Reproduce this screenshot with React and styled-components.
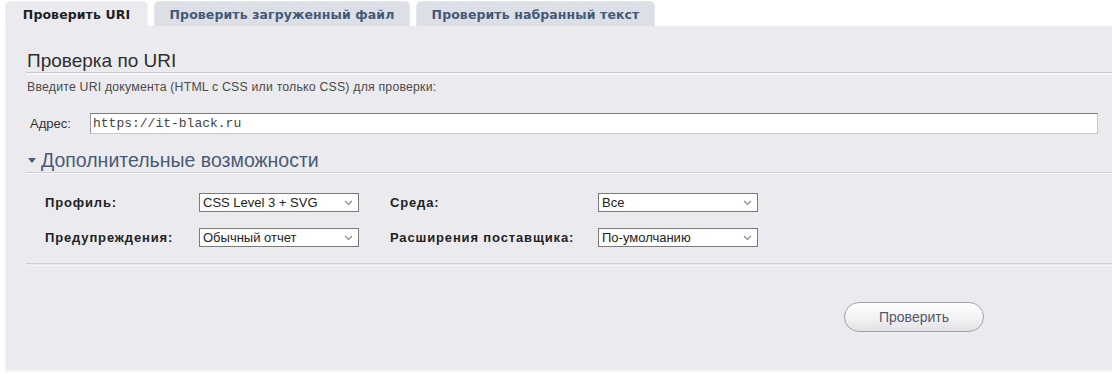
import styled, { createGlobalStyle } from "styled-components";

const GlobalStyle = createGlobalStyle`
  html, body {
    margin: 0;
    padding: 0;
    background: #ffffff;
    font-family: "Liberation Sans", Arial, sans-serif;
    overflow: hidden;
  }
`;

const Page = styled.div`
  width: 1112px;
  height: 375px;
  padding-left: 5px;
  box-sizing: border-box;
`;

const TabList = styled.div`
  display: flex;
  gap: 6px;
  padding-top: 1px;
  height: 26px;
  box-sizing: border-box;
`;

const Tab = styled.div`
  display: flex;
  align-items: center;
  justify-content: center;
  width: ${(p) => p.$w}px;
  height: 25px;
  border-radius: 5px 5px 0 0;
  box-sizing: border-box;
  font-family: "DejaVu Sans", Verdana, sans-serif;
  font-size: 12.5px;
  font-weight: bold;
  letter-spacing: 0.1px;
  background: ${(p) => (p.$active ? "#ebebef" : "#dce0e6")};
  color: ${(p) => (p.$active ? "#1f1f1f" : "#44597a")};
  border: 1px solid ${(p) => (p.$active ? "#f1f1f3" : "#e4e7eb")};
  border-bottom: none;
`;

const Panel = styled.div`
  width: 1130px;
  height: 346px;
  background: #ebebef;
  border-left: 1px solid #f3f3f5;
  border-bottom: 2px solid #f4f4f6;
  box-sizing: border-box;
  padding: 24px 0 0 20px;
`;

const Heading = styled.h2`
  margin: 0;
  font-size: 19px;
  font-weight: normal;
  line-height: 22px;
  color: #2e2e2e;
  padding-left: 1px;
  border-bottom: 1px solid #c9c9cd;
  box-shadow: 0 2px 0 #f6f6f8;
`;

const Hint = styled.p`
  margin: 6px 0 0 1px;
  font-size: 12.3px;
  letter-spacing: 0.2px;
  line-height: 16px;
  color: #4a4a4a;
`;

const AddressRow = styled.div`
  display: flex;
  align-items: center;
  margin-top: 18px;
  padding-left: 4px;
`;

const FieldLabel = styled.label`
  font-size: 13px;
  color: #333;
  width: 60px;
`;

const UrlInput = styled.div`
  width: 1008px;
  height: 21px;
  box-sizing: border-box;
  background: #fff;
  border: 1px solid #c8c8c8;
  border-top-color: #7c7c7c;
  border-left-color: #9a9a9a;
  display: flex;
  align-items: center;
  padding-left: 2px;
  font-family: "Liberation Mono", "Courier New", monospace;
  font-size: 13px;
  color: #444;
`;

const Legend = styled.div`
  margin-top: 14px;
  display: flex;
  align-items: center;
  gap: 4px;
  font-size: 19.5px;
  line-height: 24px;
  color: #4a5a75;
  border-bottom: 1px solid #d0d0d4;
  box-shadow: 0 1px 0 #f6f6f8;
  padding-left: 1px;
`;

const Options = styled.div`
  display: grid;
  grid-template-columns: 154px 191px 208px 160px;
  row-gap: 16px;
  margin-top: 20px;
  padding-left: 19px;
  align-items: center;
`;

const OptLabel = styled.div`
  font-size: 13px;
  font-weight: bold;
  color: #222;
  letter-spacing: 0.85px;
`;

const Select = styled.div`
  width: 160px;
  height: 19px;
  box-sizing: border-box;
  background: #fff;
  border: 1px solid #7a7a7a;
  display: flex;
  align-items: center;
  justify-content: space-between;
  padding: 0 5px 0 3px;
  font-size: 13px;
  color: #222;
`;

const Separator = styled.div`
  margin-top: 16px;
  height: 1px;
  background: #cfcfd3;
  box-shadow: 0 2px 0 #f6f6f8;
`;

const Actions = styled.div`
  display: flex;
  padding-left: 818px;
  margin-top: 38px;
`;

const Button = styled.button`
  width: 140px;
  height: 30px;
  border-radius: 15px;
  border: 1px solid #a2a2a6;
  background: linear-gradient(#ffffff, #f2f2f4 55%, #e2e2e6);
  box-shadow: inset 0 1px 0 #fff;
  font-family: "Liberation Sans", Arial, sans-serif;
  font-size: 14px;
  color: #525668;
  padding: 0;
`;

const Chevron = () => (
  <svg width="9" height="6" viewBox="0 0 9 6">
    <path d="M1 1l3.5 3.5L8 1" fill="none" stroke="#8a8a8a" strokeWidth="1.2" />
  </svg>
);

const Caret = () => (
  <svg width="10" height="10" viewBox="0 0 10 10">
    <path d="M1 3h8L5 8z" fill="#4a5a75" />
  </svg>
);

const Dropdown = ({ value }) => (
  <Select>
    <span>{value}</span>
    <Chevron />
  </Select>
);

export default function App() {
  return (
    <>
      <GlobalStyle />
      <Page>
        <TabList>
          <Tab $active $w={143}>Проверить URI</Tab>
          <Tab $w={256}>Проверить загруженный файл</Tab>
          <Tab $w={239}>Проверить набранный текст</Tab>
        </TabList>
        <Panel>
          <Heading>Проверка по URI</Heading>
          <Hint>Введите URI документа (HTML с CSS или только CSS) для проверки:</Hint>
          <AddressRow>
            <FieldLabel>Адрес:</FieldLabel>
            <UrlInput>https://it-black.ru</UrlInput>
          </AddressRow>
          <Legend>
            <Caret />
            Дополнительные возможности
          </Legend>
          <Options>
            <OptLabel>Профиль:</OptLabel>
            <Dropdown value="CSS Level 3 + SVG" />
            <OptLabel>Среда:</OptLabel>
            <Dropdown value="Все" />
            <OptLabel>Предупреждения:</OptLabel>
            <Dropdown value="Обычный отчет" />
            <OptLabel>Расширения поставщика:</OptLabel>
            <Dropdown value="По-умолчанию" />
          </Options>
          <Separator />
          <Actions>
            <Button>Проверить</Button>
          </Actions>
        </Panel>
      </Page>
    </>
  );
}
